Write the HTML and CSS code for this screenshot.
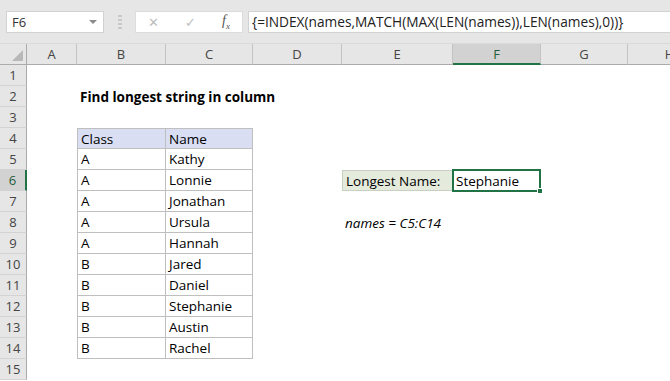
FILE: index.html
```html
<!DOCTYPE html>
<html lang="en">
<head>
  <meta charset="UTF-8" />
  <title>Find longest string in column</title>
  <meta name="viewport" content="width=device-width, initial-scale=1.0"/>
  <link rel="stylesheet" href="styles.css">
</head>
<body>

  <!-- Barra de fórmulas -->
  <div class="formula-bar">
    <div class="name-box">
      <span>F6</span>
      <span class="dropdown"></span>
    </div>
    <div class="grip"><span></span></div>
    <div class="fx-box">
      <span class="fx-icon fx-cancel">✕</span>
      <span class="fx-icon fx-ok">✓</span>
      <span class="fx-icon fx-fn">f<sub>x</sub></span>
    </div>
    <div class="formula-input">{=INDEX(names,MATCH(MAX(LEN(names)),LEN(names),0))}</div>
  </div>

  <div class="sheet" id="sheet"></div>

  <script>
    const cols = ['A', 'B', 'C', 'D', 'E', 'F', 'G', 'H'];
    const rowCount = 15;

    // conteúdo das células
    const cells = {
      B2: { text: 'Find longest string in column', cls: 'title' },
      B4: { text: 'Class', cls: 'tbl tbl-head tbl-first' },
      C4: { text: 'Name', cls: 'tbl tbl-head' },
      E6: { text: 'Longest Name:', cls: 'label' },
      F6: { text: 'Stephanie', cls: 'selected' },
      E8: { text: 'names = C5:C14', cls: 'note' }
    };

    const data = [
      ['A', 'Kathy'], ['A', 'Lonnie'], ['A', 'Jonathan'], ['A', 'Ursula'],
      ['A', 'Hannah'], ['B', 'Jared'], ['B', 'Daniel'], ['B', 'Stephanie'],
      ['B', 'Austin'], ['B', 'Rachel']
    ];
    data.forEach((d, i) => {
      cells['B' + (i + 5)] = { text: d[0], cls: 'tbl tbl-first' };
      cells['C' + (i + 5)] = { text: d[1], cls: 'tbl' };
    });

    const sheet = document.getElementById('sheet');

    const corner = document.createElement('div');
    corner.className = 'corner';
    sheet.appendChild(corner);

    cols.forEach(c => {
      const h = document.createElement('div');
      h.className = 'col-head' + (c === 'F' ? ' active' : '');
      h.textContent = c;
      sheet.appendChild(h);
    });

    for (let r = 1; r <= rowCount; r++) {
      const rh = document.createElement('div');
      rh.className = 'row-head' + (r === 6 ? ' active' : '');
      rh.textContent = r;
      sheet.appendChild(rh);

      cols.forEach(c => {
        const cell = document.createElement('div');
        const info = cells[c + r];
        cell.className = 'cell' + (info ? ' ' + info.cls : '');
        if (info) cell.textContent = info.text;
        if (info && info.cls === 'selected') {
          const handle = document.createElement('span');
          handle.className = 'fill-handle';
          cell.appendChild(handle);
        }
        sheet.appendChild(cell);
      });
    }
  </script>
</body>
</html>
```

FILE: styles.css
```css
/* RESET BÁSICO */
* {
  margin: 0;
  padding: 0;
  box-sizing: border-box;
}

body {
  font-family: "Open Sans", "Liberation Sans", sans-serif;
  background-color: #fff;
  color: #000;
  width: 670px;
  height: 381px;
  overflow: hidden;
}

/* Barra de fórmulas */
.formula-bar {
  height: 44px;
  background-color: #e6e6e6;
  display: flex;
  align-items: flex-start;
  padding: 11px 0 0 6px;
  border-bottom: 1px solid #d9d9d9;
}

.name-box {
  width: 98px;
  height: 22px;
  background-color: #fff;
  border: 1px solid #d2d2d2;
  display: flex;
  align-items: center;
  justify-content: space-between;
  padding: 0 6px 0 5px;
  font-size: 13px;
  color: #333;
}

.dropdown {
  width: 0;
  height: 0;
  border-left: 4px solid transparent;
  border-right: 4px solid transparent;
  border-top: 4px solid #8a8a8a;
}

.grip {
  width: 31px;
  height: 22px;
  display: flex;
  justify-content: center;
  align-items: center;
}

.grip span {
  width: 4px;
  height: 14px;
  background: repeating-linear-gradient(#c9c9c9 0 2px, transparent 2px 4px);
}

.fx-box {
  width: 108px;
  height: 22px;
  background-color: #fff;
  border: 1px solid #dcdcdc;
  display: flex;
  align-items: center;
  justify-content: space-between;
  padding: 0 12px 0 12px;
}

.fx-icon {
  color: #bdbdbd;
  font-size: 13px;
}

.fx-fn {
  color: #555;
  font-family: "Liberation Serif", serif;
  font-style: italic;
  font-size: 14px;
}

.fx-fn sub {
  font-size: 9px;
}

.formula-input {
  flex: 1;
  height: 22px;
  margin-left: 5px;
  background-color: #fff;
  border: 1px solid #d2d2d2;
  border-right: none;
  padding-left: 3px;
  font-size: 13.7px;
  line-height: 20px;
  color: #222;
  white-space: nowrap;
  overflow: hidden;
}

/* Planilha */
.sheet {
  display: grid;
  grid-template-columns: 27px 50px 89px 87px 89px 111px 88px 87px 84px;
  grid-auto-rows: 21px;
  font-size: 13.5px;
  width: 670px;
  overflow: hidden;
}

.corner {
  background-color: #e6e6e6;
  border-right: 1px solid #ababab;
  border-bottom: 1px solid #ababab;
  position: relative;
}

.corner::after {
  content: "";
  position: absolute;
  right: 3px;
  bottom: 3px;
  border-left: 11px solid transparent;
  border-bottom: 11px solid #b8b8b8;
}

.col-head {
  background-color: #e6e6e6;
  border-right: 1px solid #c3c3c3;
  border-bottom: 1px solid #ababab;
  color: #444;
  font-size: 13px;
  display: flex;
  align-items: center;
  justify-content: center;
}

.col-head.active {
  background-color: #d2d2d2;
  border-bottom: 2px solid #217346;
  color: #1e5c3a;
}

.row-head {
  background-color: #e6e6e6;
  border-right: 1px solid #ababab;
  border-bottom: 1px solid #d3d3d3;
  color: #444;
  font-size: 13px;
  display: flex;
  align-items: center;
  justify-content: center;
}

.row-head.active {
  background-color: #d2d2d2;
  border-right: 2px solid #217346;
  color: #1e5c3a;
}

.cell {
  display: flex;
  align-items: center;
  padding-left: 3px;
  white-space: nowrap;
  position: relative;
}

.title {
  font-weight: bold;
  overflow: visible;
}

.tbl {
  border-right: 1px solid #bfbfbf;
  border-bottom: 1px solid #bfbfbf;
}

.tbl-first {
  border-left: 1px solid #bfbfbf;
}

.tbl-head {
  background-color: #d9def3;
  border-top: 1px solid #bfbfbf;
}

.label {
  background-color: #e4eadc;
  border: 1px solid #c9cfc1;
}

.selected {
  margin: -1px 0 -1px -1px;
  border: 2px solid #217346;
  padding-left: 2px;
}

.fill-handle {
  position: absolute;
  right: -4px;
  bottom: -4px;
  width: 6px;
  height: 6px;
  background-color: #217346;
  border: 1px solid #fff;
}

.note {
  font-style: italic;
}
```
